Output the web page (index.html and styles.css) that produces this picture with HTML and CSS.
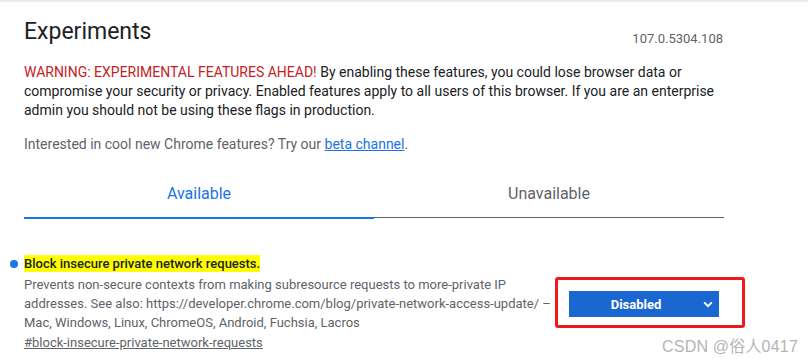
FILE: index.html
```html
<!DOCTYPE html>
<html lang="en">
<head>
<meta charset="utf-8">
<title>Experiments</title>
<link rel="stylesheet" href="styles.css">
</head>
<body>
<div class="topshadow"></div>
<main class="page">
  <header class="header">
    <h1 class="title">Experiments</h1>
    <span class="version">107.0.5304.108</span>
  </header>
  <p class="warning"><span class="warning-lead">WARNING: EXPERIMENTAL FEATURES AHEAD!</span><span class="warning-rest"> By enabling these features, you could lose browser data or compromise your security or privacy. Enabled features apply to all users of this browser. If you are an enterprise admin you should not be using these flags in production.</span></p>
  <p class="promo">Interested in cool new Chrome features? Try our <a class="link" href="#">beta channel</a>.</p>
  <nav class="tabs">
    <div class="tab tab-active">Available</div>
    <div class="tab">Unavailable</div>
  </nav>
  <section class="experiment">
    <div class="exp-text">
      <h2 class="exp-name"><span class="dot"></span><mark class="hl">Block insecure private network requests.</mark></h2>
      <p class="exp-desc">Prevents non-secure contexts from making subresource requests to more-private IP addresses. See also: https://developer.chrome.com/blog/private-network-access-update/ – Mac, Windows, Linux, ChromeOS, Android, Fuchsia, Lacros</p>
      <a class="exp-link" href="#">#block-insecure-private-network-requests</a>
    </div>
    <div class="exp-actions">
      <div class="select">
        <span class="select-label">Disabled</span>
        <svg class="chev" width="10" height="7" viewBox="0 0 10 7"><path d="M1.2 1.4 L5 5.2 L8.8 1.4" fill="none" stroke="#fff" stroke-width="2"/></svg>
      </div>
      <div class="annot"></div>
    </div>
  </section>
</main>
<div class="watermark">CSDN @俗人0417</div>
</body>
</html>
```

FILE: styles.css
```css
* { box-sizing: border-box; }
html, body { margin: 0; padding: 0; background: #fff; }
body {
  font-family: Roboto, "Noto Sans", Arial, sans-serif;
  color: #202124;
  width: 808px;
  height: 361px;
  overflow: hidden;
  position: relative;
}
.topshadow {
  position: absolute;
  left: 0; right: 0; top: 0;
  height: 3px;
  background: linear-gradient(#e4e4e4, #fff);
}
.page {
  width: 700px;
  margin-left: 24px;
  padding-top: 17px;
}
.header {
  display: flex;
  justify-content: space-between;
  align-items: baseline;
}
.title {
  margin: 0;
  font-size: 23px;
  font-weight: 400;
  line-height: 30px;
  color: #202124;
}
.version {
  font-size: 13px;
  color: #5f6368;
  position: relative;
  top: 4px;
  margin-right: 1px;
}
.warning {
  margin: 16px 0 0;
  font-size: 14px;
  line-height: 19px;
  color: #202124;
}
.warning-lead { color: #c5221f; }
.warning-rest { color: #202124; }
.promo {
  margin: 15px 0 0;
  font-size: 14px;
  line-height: 19px;
  color: #5f6368;
}
.link { color: #1a73e8; text-decoration: underline; }
.tabs {
  display: flex;
  margin-top: 28px;
}
.tab {
  flex: 1;
  text-align: center;
  font-size: 16px;
  color: #5f6368;
  height: 36px;
  line-height: 24px;
  border-bottom: 1px solid #5f6368;
}
.tab-active {
  color: #1a73e8;
  border-bottom: 2px solid #1a73e8;
  height: 37px;
}
.experiment {
  display: flex;
  align-items: center;
  margin-top: 35px;
}
.exp-text { width: 531px; }
.exp-name {
  margin: 0 0 1px;
  font-size: 13px;
  font-weight: 500;
  line-height: 20px;
  position: relative;
}
.dot {
  position: absolute;
  left: -14px;
  top: 6px;
  width: 8px;
  height: 8px;
  border-radius: 50%;
  background: #1a73e8;
}
.hl { background: #ffff00; color: #202124; padding: 1px 0; }
.exp-desc {
  margin: 0;
  font-size: 13px;
  line-height: 19px;
  color: #5f6368;
}
.exp-link {
  display: inline-block;
  margin-top: 0;
  font-size: 13px;
  line-height: 20px;
  color: #5f6368;
  text-decoration: underline;
}
.exp-actions {
  position: relative;
  margin-left: 14px;
  margin-top: 1px;
}
.select {
  width: 150px;
  height: 26px;
  background: #1a67d2;
  color: #fff;
  font-size: 13px;
  font-weight: 700;
  display: flex;
  align-items: center;
  justify-content: center;
  position: relative;
}
.select-label { margin-left: -16px; }
.chev { position: absolute; right: 6px; top: 10px; }
.annot {
  position: absolute;
  left: -14px;
  top: -14px;
  width: 190px;
  height: 51px;
  border: 3px solid #f01818;
  border-radius: 3px;
}
.watermark {
  position: absolute;
  left: 662px;
  top: 333px;
  font-family: "Liberation Sans", "Noto Sans CJK SC", sans-serif;
  font-size: 16px;
  color: #b4b4b4;
  letter-spacing: 0.2px;
}
```
